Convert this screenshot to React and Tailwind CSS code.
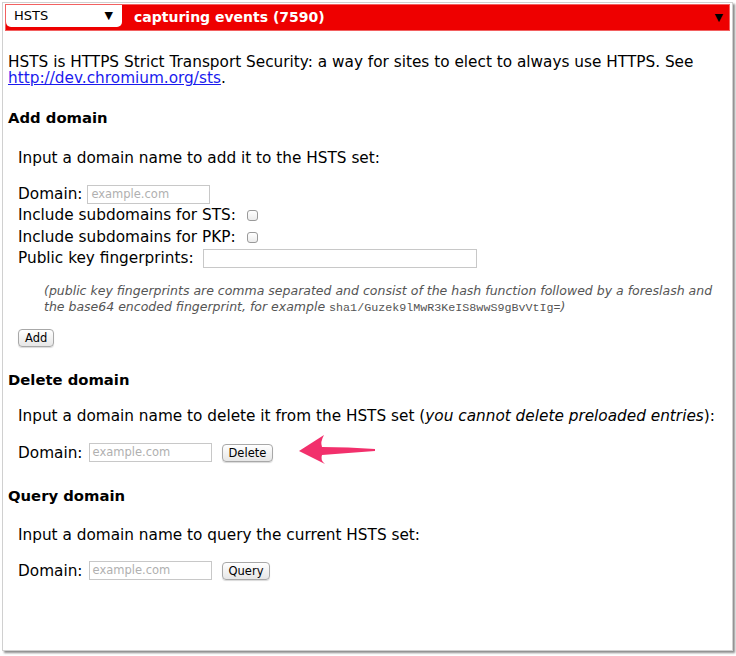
import React from "react";

const font = { fontFamily: '"DejaVu Sans", "Lucida Grande", sans-serif' };

function TextInput({ w = "w-[123px]", placeholder }) {
  return (
    <span
      className={`inline-block ${w} h-[19px] border border-[#c8c8c8] bg-white align-middle text-[11.5px] leading-[17px] pl-[3px] text-[#b0b0b0]`}
    >
      {placeholder}
    </span>
  );
}

function Btn({ children }) {
  return (
    <span className="inline-block align-middle h-[18px] px-[6px] border border-[#a8a8a8] rounded-[4px] bg-gradient-to-b from-white to-[#e6e6e6] text-[11.5px] leading-[16px] text-black shadow-[0_1px_1px_rgba(0,0,0,0.15)]">
      {children}
    </span>
  );
}

function Checkbox() {
  return (
    <span className="inline-block align-middle w-[11px] h-[11px] border border-[#9a9a9a] rounded-[3px] bg-gradient-to-b from-white to-[#ececec] ml-[11px]" />
  );
}

export default function App() {
  return (
    <div className="w-[736px] h-[656px] bg-white pt-[2px] pl-[2px]" style={font}>
      <div className="w-[731px] h-[649px] border border-[#d0d0d0] shadow-[2px_2px_2px_rgba(0,0,0,0.45)] bg-white pt-[1px] px-[2px] text-[15.3px] text-black">
        {/* red bar */}
        <div className="h-[27px] bg-[#ee0000] border border-[#f26060] flex items-start relative">
          <div className="w-[116px] h-[22px] bg-white rounded-b-[5px] flex items-center justify-between pl-[8px] pr-[9px]">
            <span className="text-[13px]">HSTS</span>
            <span className="text-[11px]">▼</span>
          </div>
          <div className="ml-[12px] text-white font-bold text-[14px] leading-[24px]">capturing events (7590)</div>
          <span className="absolute right-[6px] top-[5px] text-[11px] text-black">▼</span>
        </div>

        <div className="pl-[3px] pt-[23px] leading-[16px]">
          <p>
            HSTS is HTTPS Strict Transport Security: a way for sites to elect to always use HTTPS. See{" "}
            <a className="text-[#1a1aee] underline">http://dev.chromium.org/sts</a>.
          </p>

          <h2 className="font-bold text-[14.8px] mt-[24px]">Add domain</h2>
          <div className="pl-[10px]">
            <p className="mt-[24px]">Input a domain name to add it to the HSTS set:</p>
            <div className="mt-[18px] leading-[21.3px]">
              <div>
                Domain: <TextInput placeholder="example.com" />
              </div>
              <div>
                Include subdomains for STS:
                <Checkbox />
              </div>
              <div>
                Include subdomains for PKP:
                <Checkbox />
              </div>
              <div>
                Public key fingerprints:
                <span className="ml-[9px]">
                  <TextInput w="w-[274px]" />
                </span>
              </div>
            </div>
            <p className="mt-[14px] ml-[26px] pr-[4px] text-[12.5px] leading-[16px] italic text-[#555]">
              (public key fingerprints are comma separated and consist of the hash function followed by a foreslash and
              the base64 encoded fingerprint, for example{" "}
              <code className="not-italic text-[11.7px]" style={{ fontFamily: '"Liberation Mono", monospace' }}>
                sha1/Guzek9lMwR3KeIS8wwS9gBvVtIg=
              </code>
              )
            </p>
            <div className="mt-[13px]">
              <Btn>Add</Btn>
            </div>
          </div>

          <h2 className="font-bold text-[14.8px] mt-[25px]">Delete domain</h2>
          <div className="pl-[10px]">
            <p className="mt-[20px]">
              Input a domain name to delete it from the HSTS set (<i>you cannot delete preloaded entries</i>):
            </p>
            <div className="mt-[16px] flex items-center">
              <span>Domain:</span>
              <span className="ml-[6px] flex">
                <TextInput placeholder="example.com" />
              </span>
              <span className="ml-[10px] flex">
                <Btn>Delete</Btn>
              </span>
              <svg width="80" height="31" viewBox="0 0 80 31" className="ml-[25px] -mt-[6px]">
                <path
                  d="M1 17 L26 1 Q22 8 24 13 Q50 13 77 15 L77 17 Q50 19 24 21 Q22 26 27 30 Z"
                  fill="#f2306c"
                />
              </svg>
            </div>
          </div>

          <h2 className="font-bold text-[14.8px] mt-[23px]">Query domain</h2>
          <div className="pl-[10px]">
            <p className="mt-[23px]">Input a domain name to query the current HSTS set:</p>
            <div className="mt-[18px] flex items-center">
              <span>Domain:</span>
              <span className="ml-[6px] flex">
                <TextInput placeholder="example.com" />
              </span>
              <span className="ml-[10px] flex">
                <Btn>Query</Btn>
              </span>
            </div>
          </div>
        </div>
      </div>
    </div>
  );
}
